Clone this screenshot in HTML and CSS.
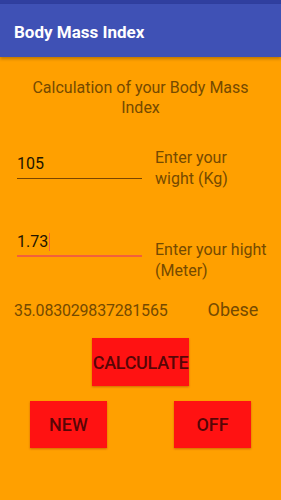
FILE: index.html
```html
<!DOCTYPE html>
<html>
<head>
    <title>Body Mass Index</title>
    <link rel="stylesheet" href="styles.css">
</head>
<body>
    <div class="status-bar"></div>
    <div class="app-bar">
        <span class="app-title">Body Mass Index</span>
    </div>

    <div class="content">
        <p class="intro">Calculation of your Body Mass Index</p>

        <div class="input-row weight-row">
            <div class="field">
                <span class="field-value">105</span>
            </div>
            <span class="field-label">Enter your wight (Kg)</span>
        </div>

        <div class="input-row height-row">
            <div class="field focused">
                <span class="field-value">1.73</span><span class="caret"></span>
            </div>
            <span class="field-label">Enter your hight (Meter)</span>
        </div>

        <div class="result-row">
            <span class="result-value">35.083029837281565</span>
            <span class="result-status">Obese</span>
        </div>

        <div class="main-action">
            <button class="btn btn-calc">CALCULATE</button>
        </div>

        <div class="actions">
            <button class="btn btn-small">NEW</button>
            <button class="btn btn-small">OFF</button>
        </div>
    </div>
</body>
</html>
```

FILE: styles.css
```css
body {
    width: 281px;
    height: 500px;
    margin: 0;
    padding: 0;
    font-family: Roboto, "Liberation Sans", sans-serif;
    background-color: #ffa000;
    overflow: hidden;
}

.status-bar {
    height: 4px;
    background: #303f9f;
}

.app-bar {
    height: 53px;
    background: #3f51b5;
    display: flex;
    align-items: center;
    padding-left: 14px;
    box-shadow: 0 2px 3px rgba(0, 0, 0, 0.25);
    position: relative;
}

.app-title {
    color: white;
    font-size: 17px;
    font-weight: 700;
    margin-top: 2px;
}

.content {
    padding-top: 21px;
}

.intro {
    margin: 0 24px;
    text-align: center;
    font-size: 16px;
    line-height: 20px;
    color: #754a00;
}

.input-row {
    display: flex;
    align-items: flex-start;
}

.weight-row {
    margin-top: 29px;
}

.height-row {
    margin-top: 43px;
}

.field {
    flex-shrink: 0;
    width: 125px;
    margin-left: 17px;
    padding-bottom: 4px;
    border-bottom: 1px solid #7a4500;
    font-size: 16px;
    line-height: 20px;
    color: #221600;
    display: flex;
    align-items: center;
}

.weight-row .field {
    margin-top: 7px;
}

.field.focused {
    border-bottom: 2px solid #f2603c;
    padding-bottom: 3px;
}

.caret {
    width: 1px;
    height: 18px;
    background: #f2603c;
    margin-left: 1px;
}

.field-label {
    width: 113px;
    margin-left: 13px;
    font-size: 16px;
    line-height: 21px;
    color: #754a00;
}

.height-row .field-label {
    margin-top: 7px;
}

.result-row {
    display: flex;
    align-items: baseline;
    margin-top: 19px;
    padding-left: 14px;
    color: #754a00;
}

.result-value {
    font-size: 16px;
    line-height: 20px;
    letter-spacing: -0.2px;
}

.result-status {
    margin-left: 40px;
    font-size: 18px;
    line-height: 20px;
}

.btn {
    background: #ff1212;
    border: none;
    color: rgba(0, 0, 0, 0.68);
    font-family: inherit;
    font-size: 18px;
    font-weight: 500;
    padding: 0;
    box-shadow: 0 1px 2px rgba(120, 0, 0, 0.35);
}

.main-action {
    margin-top: 17px;
    padding-left: 92px;
}

.btn-calc {
    width: 97px;
    height: 48px;
    letter-spacing: -0.3px;
}

.actions {
    display: flex;
    gap: 67px;
    margin-top: 15px;
    padding-left: 30px;
}

.btn-small {
    width: 77px;
    height: 47px;
}
```
